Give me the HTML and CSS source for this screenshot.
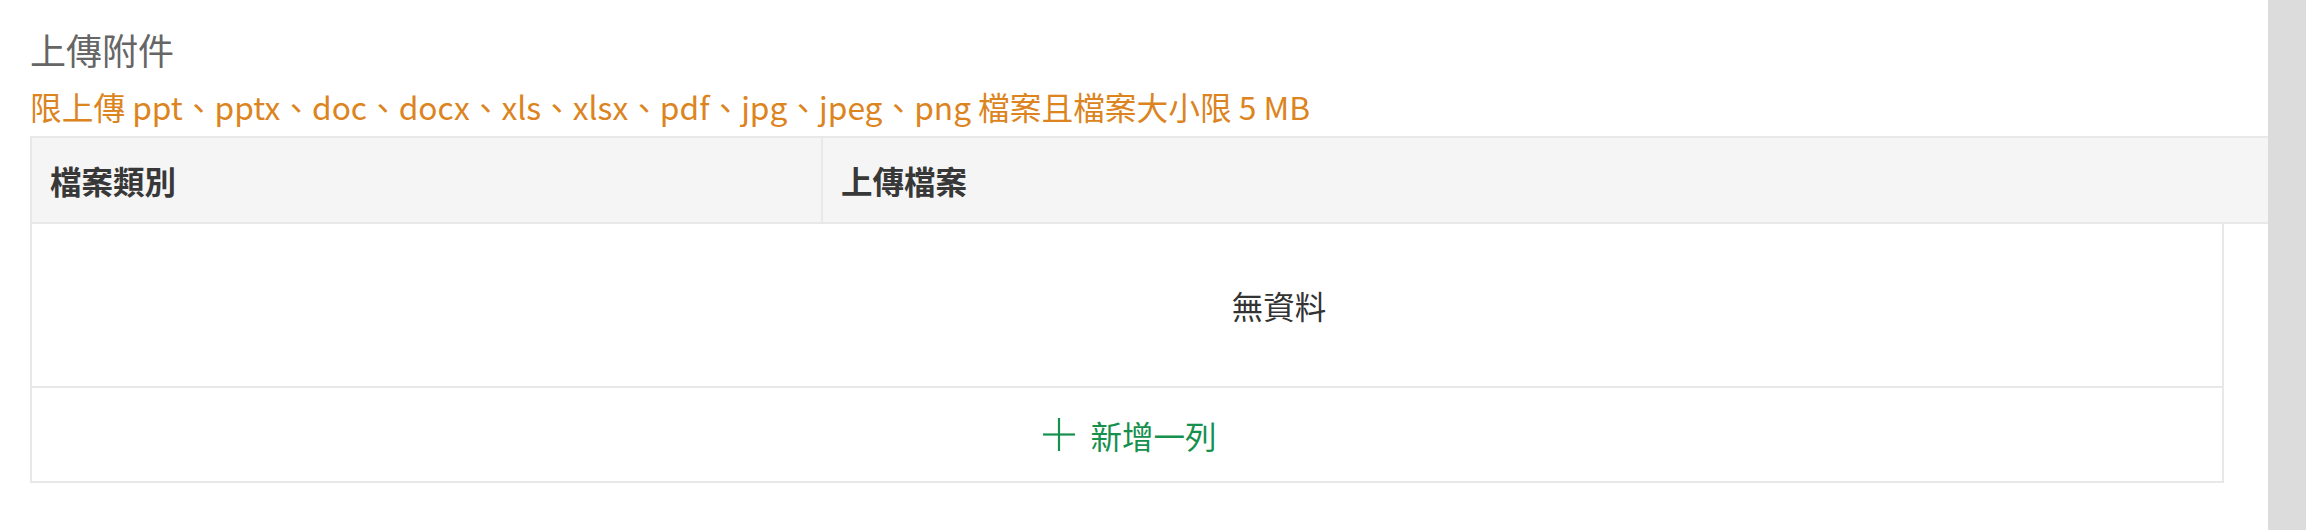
FILE: index.html
```html
<!DOCTYPE html>
<html lang="zh-Hant">
<head>
  <meta charset="UTF-8">
  <title>上傳附件</title>
  <link rel="stylesheet" href="styles.css">
</head>
<body>

  <div class="page">
    <main class="content">
      <h2 class="title">上傳附件</h2>
      <p class="hint">限上傳 ppt、pptx、doc、docx、xls、xlsx、pdf、jpg、jpeg、png 檔案且檔案大小限 5 MB</p>

      <!-- 附件表格 -->
      <div class="file-table">
        <div class="thead">
          <div class="th col-type">檔案類別</div>
          <div class="th col-file">上傳檔案</div>
        </div>
        <div class="tbody">
          <div class="empty-row">無資料</div>
          <button class="add-row" type="button">
            <svg class="plus" width="32" height="33" viewBox="0 0 32 33">
              <line x1="16" y1="0" x2="16" y2="33" />
              <line x1="0" y1="16.5" x2="32" y2="16.5" />
            </svg>
            <span>新增一列</span>
          </button>
        </div>
      </div>
    </main>

    <div class="scroll-track"></div>
  </div>

</body>
</html>
```

FILE: styles.css
```css
body {
  margin: 0;
  padding: 0;
  background: #fff;
  font-family: "Noto Sans CJK TC", "Noto Sans", sans-serif;
}

.page {
  display: flex;
  height: 530px;
}

.content {
  flex: 1;
  padding-left: 30px;
}

.scroll-track {
  width: 38px;
  background: #dcdcdc;
}

.title {
  margin: 0;
  padding-top: 22px;
  font-size: 36px;
  line-height: 54px;
  font-weight: normal;
  color: #666;
}

.hint {
  margin: 8px 0 0;
  font-size: 31.7px;
  line-height: 44px;
  color: #dc8420;
}

.file-table {
  margin-top: 8px;
}

.thead {
  display: flex;
  background: #f5f5f5;
  border-top: 2px solid #e8e8e8;
  border-bottom: 2px solid #e8e8e8;
  border-left: 2px solid #e8e8e8;
}

.th {
  height: 84px;
  display: flex;
  align-items: center;
  padding-left: 18px;
  font-size: 31.5px;
  font-weight: bold;
  color: #383838;
}

.col-type {
  width: 771px;
  border-right: 2px solid #e8e8e8;
}

.col-file {
  flex: 1;
}

.tbody {
  margin-right: 44px;
  border-left: 2px solid #e8e8e8;
  border-right: 2px solid #e8e8e8;
}

.empty-row {
  height: 162px;
  display: flex;
  align-items: center;
  justify-content: center;
  padding-left: 304px;
  font-size: 31.5px;
  color: #333;
  border-bottom: 2px solid #e8e8e8;
}

.add-row {
  width: 100%;
  height: 95px;
  display: flex;
  align-items: center;
  justify-content: center;
  gap: 15px;
  background: #fff;
  border: none;
  border-bottom: 2px solid #e8e8e8;
  font-family: inherit;
  font-size: 31.5px;
  color: #15904d;
  cursor: pointer;
  padding: 0 0 0 6px;
}

.plus line {
  stroke: #15904d;
  stroke-width: 2.2;
}
```
